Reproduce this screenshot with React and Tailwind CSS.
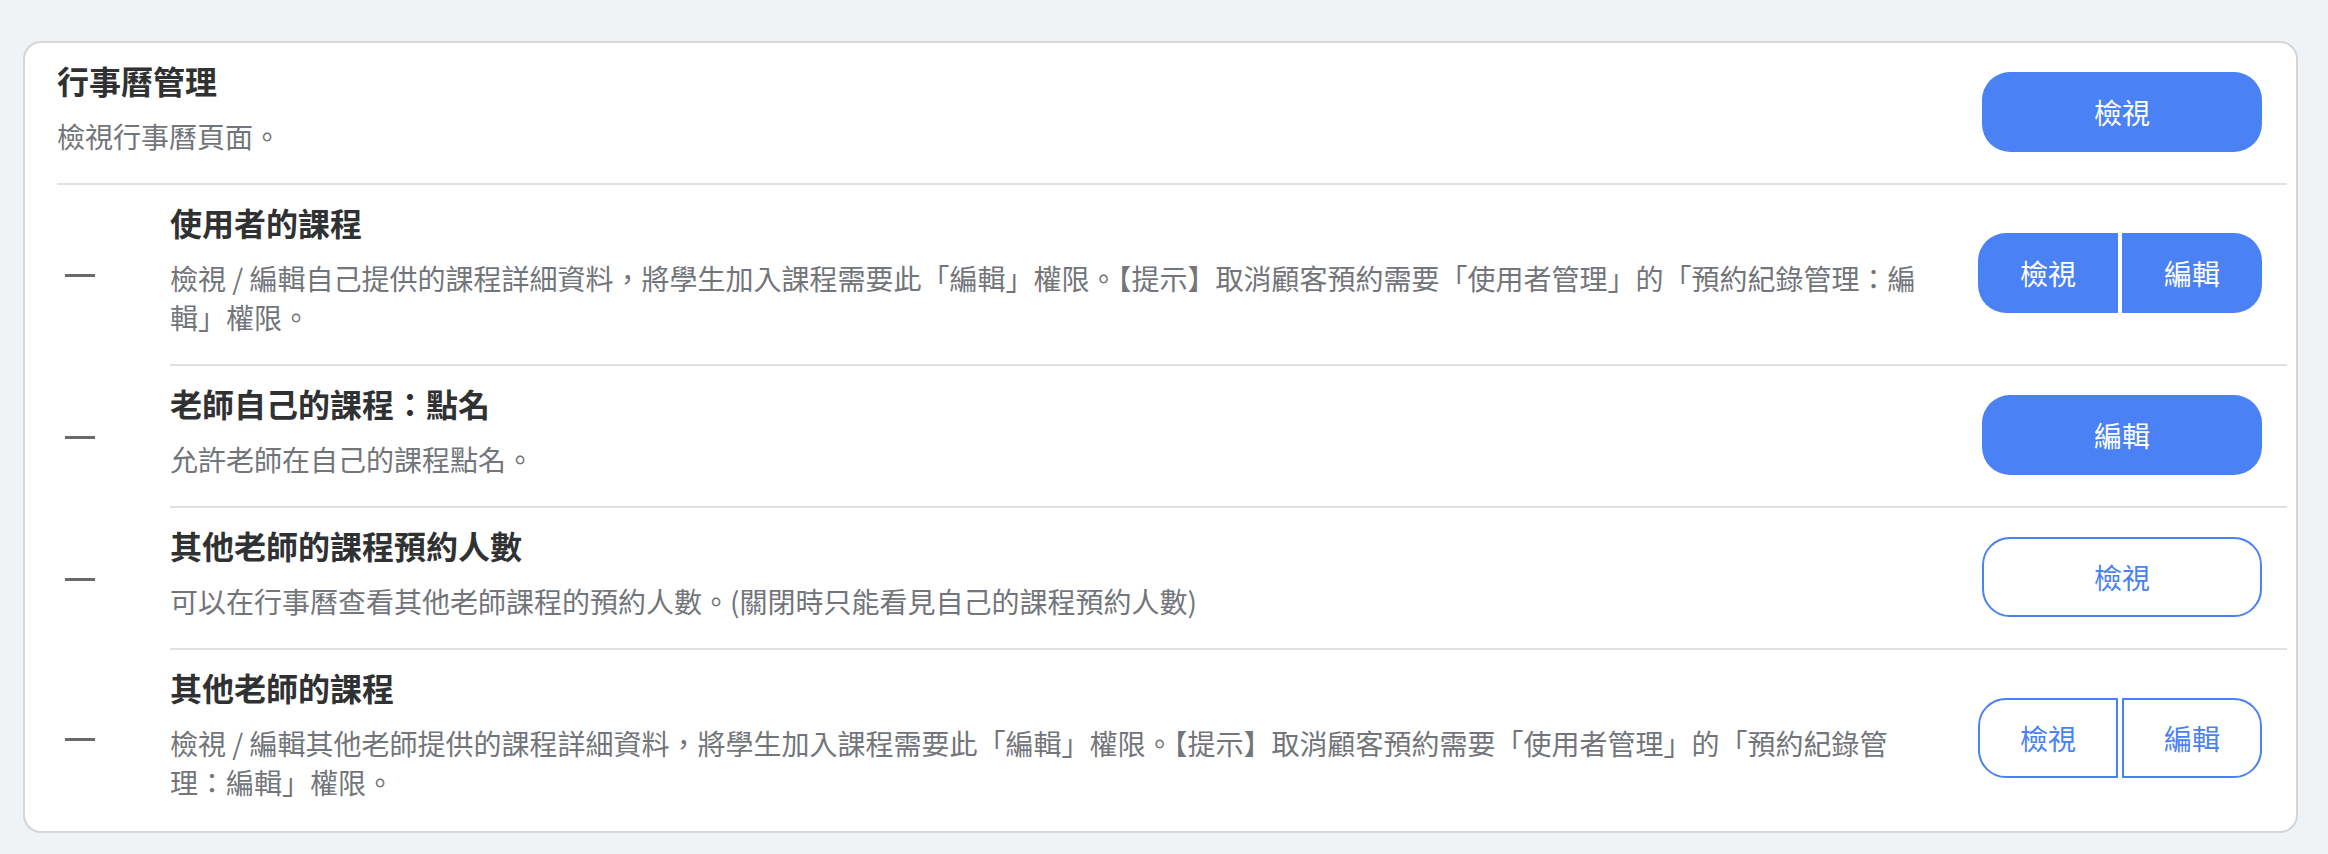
import React from "react";

const rows = [
  {
    title: "使用者的課程",
    desc: "檢視 / 編輯自己提供的課程詳細資料，將學生加入課程需要此「編輯」權限。【提示】取消顧客預約需要「使用者管理」的「預約紀錄管理：編輯」權限。",
    buttons: ["檢視", "編輯"],
    filled: true,
  },
  {
    title: "老師自己的課程：點名",
    desc: "允許老師在自己的課程點名。",
    buttons: ["編輯"],
    filled: true,
  },
  {
    title: "其他老師的課程預約人數",
    desc: "可以在行事曆查看其他老師課程的預約人數。(關閉時只能看見自己的課程預約人數)",
    buttons: ["檢視"],
    filled: false,
  },
  {
    title: "其他老師的課程",
    desc: "檢視 / 編輯其他老師提供的課程詳細資料，將學生加入課程需要此「編輯」權限。【提示】取消顧客預約需要「使用者管理」的「預約紀錄管理：編輯」權限。",
    buttons: ["檢視", "編輯"],
    filled: false,
  },
];

function Buttons({ labels, filled }) {
  const base = filled
    ? "bg-[#4a81f4] text-white"
    : "bg-white text-[#4a81f4] border-2 border-[#4a81f4]";

  if (labels.length === 1) {
    return (
      <button className={`${base} w-[280px] h-[80px] rounded-[28px] text-[28px] flex items-center justify-center`}>
        {labels[0]}
      </button>
    );
  }

  return (
    <div className="flex gap-[4px]">
      <button className={`${base} w-[140px] h-[80px] rounded-l-[28px] text-[28px] flex items-center justify-center`}>
        {labels[0]}
      </button>
      <button className={`${base} w-[140px] h-[80px] rounded-r-[28px] text-[28px] flex items-center justify-center`}>
        {labels[1]}
      </button>
    </div>
  );
}

function Text({ title, desc }) {
  return (
    <div className="flex-1 min-w-0 pr-[40px]">
      <h3 className="text-[32px] leading-[40px] font-semibold text-[#303133]">{title}</h3>
      <p className="mt-[17px] text-[28px] leading-[39px] text-[#72757a]">{desc}</p>
    </div>
  );
}

export default function App() {
  return (
    <div className="min-h-screen bg-[#eff3f6] pl-[23px] pr-[30px] pt-[41px] pb-[23px] font-['Noto_Sans_CJK_TC','Noto_Sans',sans-serif]">
      <div className="bg-white border-2 border-[#d5d5d5] rounded-[18px] pl-[32px] pr-[9px] pb-[2px]">
        <div className="flex items-center border-b-2 border-[#dfe1e5] pt-[17px] pb-[27px]">
          <Text title="行事曆管理" desc="檢視行事曆頁面。" />
          <div className="w-[284px] mr-[25px] mt-[7px] flex justify-end">
            <Buttons labels={["檢視"]} filled />
          </div>
        </div>

        {rows.map((row, i) => (
          <div key={row.title} className="flex">
            <div className="w-[113px] flex items-center">
              <div className="ml-[8px] w-[30px] h-[3px] bg-[#6a6a6a]" />
            </div>
            <div
              className={`flex-1 flex items-center pt-[17px] pb-[27px] ${
                i < rows.length - 1 ? "border-b-2 border-[#dfe1e5]" : ""
              }`}
            >
              <Text title={row.title} desc={row.desc} />
              <div className="w-[284px] mr-[25px] mt-[7px] flex justify-end">
                <Buttons labels={row.buttons} filled={row.filled} />
              </div>
            </div>
          </div>
        ))}
      </div>
    </div>
  );
}
